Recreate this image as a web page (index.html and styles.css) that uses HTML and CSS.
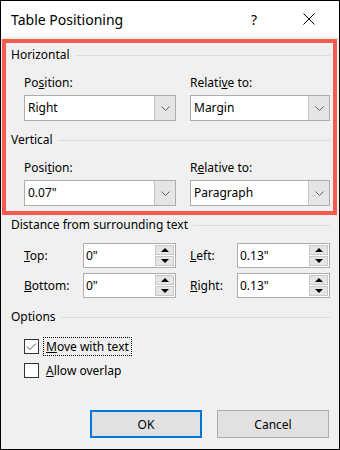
FILE: index.html
```html
<!DOCTYPE html>
<html lang="en">
<head>
  <meta charset="UTF-8">
  <title>Table Positioning</title>
  <link rel="stylesheet" href="styles.css">
</head>
<body>
<div class="dialog">
  <div class="titlebar">
    <span class="title">Table Positioning</span>
    <span class="help">?</span>
    <span class="close">
      <svg width="12" height="12" viewBox="0 0 12 12"><path d="M0.5 0.5 L11.5 11.5 M11.5 0.5 L0.5 11.5" stroke="#000" stroke-width="1" fill="none"/></svg>
    </span>
  </div>

  <div class="content">
    <div class="highlight">
      <div class="group">
        <div class="group-head">Horizontal</div>
        <div class="pair">
          <div class="field left">
            <label>Po<u>s</u>ition:</label>
            <div class="combo"><span>Right</span><i class="drop"><svg width="9" height="5" viewBox="0 0 9 5"><polyline points="0.5,0.5 4.5,4.5 8.5,0.5" fill="none" stroke="#606060"/></svg></i></div>
          </div>
          <div class="field right">
            <label>Relati<u>v</u>e to:</label>
            <div class="combo"><span>Margin</span><i class="drop"><svg width="9" height="5" viewBox="0 0 9 5"><polyline points="0.5,0.5 4.5,4.5 8.5,0.5" fill="none" stroke="#606060"/></svg></i></div>
          </div>
        </div>
      </div>
      <div class="group">
        <div class="group-head">Vertical</div>
        <div class="pair">
          <div class="field left">
            <label>Posi<u>t</u>ion:</label>
            <div class="combo"><span>0.07"</span><i class="drop"><svg width="9" height="5" viewBox="0 0 9 5"><polyline points="0.5,0.5 4.5,4.5 8.5,0.5" fill="none" stroke="#606060"/></svg></i></div>
          </div>
          <div class="field right">
            <label>R<u>e</u>lative to:</label>
            <div class="combo"><span>Paragraph</span><i class="drop"><svg width="9" height="5" viewBox="0 0 9 5"><polyline points="0.5,0.5 4.5,4.5 8.5,0.5" fill="none" stroke="#606060"/></svg></i></div>
          </div>
        </div>
      </div>
    </div>

    <div class="section">
      <div class="group-head dist-head">Distance from surrounding text</div>
      <div class="spin-grid">
        <label><u>T</u>op:</label>
        <div class="spin"><span class="val">0"</span><span class="btns"><i><b class="up"></b></i><i><b class="down"></b></i></span></div>
        <label class="r"><u>L</u>eft:</label>
        <div class="spin"><span class="val">0.13"</span><span class="btns"><i><b class="up"></b></i><i><b class="down"></b></i></span></div>
        <label><u>B</u>ottom:</label>
        <div class="spin"><span class="val">0"</span><span class="btns"><i><b class="up"></b></i><i><b class="down"></b></i></span></div>
        <label class="r"><u>R</u>ight:</label>
        <div class="spin"><span class="val">0.13"</span><span class="btns"><i><b class="up"></b></i><i><b class="down"></b></i></span></div>
      </div>

      <div class="group-head opt-head">Options</div>
      <div class="checks">
        <div class="check">
          <span class="box"><svg width="13" height="13" viewBox="0 0 13 13"><polyline points="2,6.5 5,9.5 11,3.5" fill="none" stroke="#555" stroke-width="1"/></svg></span>
          <span class="text focus"><u>M</u>ove with text</span>
        </div>
        <div class="check">
          <span class="box"></span>
          <span class="text"><u>A</u>llow overlap</span>
        </div>
      </div>
    </div>

    <div class="buttons">
      <button class="btn primary">OK</button>
      <button class="btn">Cancel</button>
    </div>
  </div>
</div>
</body>
</html>
```

FILE: styles.css
```css
* {
  box-sizing: border-box;
}

body {
  margin: 0;
  background: #fff;
  font-family: "Noto Sans", "Open Sans", sans-serif;
  font-size: 12px;
  color: #000;
}

.dialog {
  width: 340px;
  height: 450px;
  border: 1px solid #000;
  display: flex;
  flex-direction: column;
  background: #f0f0f0;
}

/* title bar */
.titlebar {
  height: 36px;
  flex: none;
  background: #fff;
  display: flex;
  align-items: center;
  padding: 0 24px 0 10px;
  font-size: 14px;
}
.title {
  flex: 1;
}
.help {
  margin-right: 46px;
}
.close svg {
  display: block;
}

.content {
  flex: 1;
  padding-top: 2px;
}

/* red outline round the first two groups */
.highlight {
  margin: 0 2px 0 1px;
  border: 4px solid #f55a4e;
  padding: 4px 3px 5px 5px;
}

.group + .group {
  margin-top: 11px;
}

.group-head {
  display: flex;
  align-items: center;
  height: 16px;
  line-height: 16px;
}
.group-head::after {
  content: "";
  flex: 1;
  border-top: 1px solid #dcdcdc;
  margin-left: 5px;
}

.pair {
  display: flex;
  gap: 14px;
  margin: 12px 0 0 13px;
}
.field.left {
  width: 152px;
}
.field.right {
  flex: 1;
}
.field label {
  display: block;
  line-height: 16px;
  margin-bottom: 4px;
}

.combo {
  height: 26px;
  border: 1px solid #adadad;
  background: #fff;
  display: flex;
}
.combo span {
  flex: 1;
  line-height: 24px;
  padding-left: 3px;
}
.drop {
  width: 21px;
  background: #e5e5e5;
  border-left: 1px solid #c4c4c4;
  display: flex;
  align-items: center;
  justify-content: center;
}

/* lower part */
.section {
  padding: 0 9px 0 10px;
}
.dist-head {
  margin-top: 2px;
}

.spin-grid {
  display: grid;
  grid-template-columns: 59px 93px 61px 93px;
  grid-auto-rows: 25px;
  row-gap: 5px;
  margin: 10px 0 0 13px;
}
.spin-grid label {
  line-height: 25px;
}
.spin-grid label.r {
  padding-left: 14px;
}

.spin {
  border: 1px solid #adadad;
  background: #fff;
  display: flex;
}
.spin .val {
  flex: 1;
  line-height: 23px;
  padding-left: 2px;
}
.btns {
  width: 21px;
  padding: 1px;
  display: flex;
  flex-direction: column;
  gap: 1px;
}
.btns i {
  flex: 1;
  background: #e5e5e5;
  border: 1px solid #c8c8c8;
  display: flex;
  align-items: center;
  justify-content: center;
}
.up, .down {
  width: 0;
  height: 0;
  border-left: 4px solid transparent;
  border-right: 4px solid transparent;
}
.up {
  border-bottom: 4px solid #000;
}
.down {
  border-top: 4px solid #000;
}

.opt-head {
  margin-top: 11px;
}

.checks {
  margin: 9px 0 0 13px;
}
.check {
  height: 24px;
  display: flex;
  align-items: center;
}
.box {
  width: 15px;
  height: 15px;
  border: 1px solid #333;
  background: #fff;
  display: flex;
  align-items: center;
  justify-content: center;
}
.check .text {
  margin-left: 4px;
  padding: 0 2px;
  line-height: 17px;
  border: 1px solid transparent;
}
.check .text.focus {
  border: 1px dotted #000;
}

.buttons {
  margin-top: 28px;
  display: flex;
  justify-content: flex-end;
  gap: 15px;
  padding-right: 10px;
}
.btn {
  width: 112px;
  height: 28px;
  background: #e1e1e1;
  border: 1px solid #adadad;
  font: inherit;
  color: #000;
  padding: 0;
}
.btn.primary {
  border: 2px solid #0078d7;
}
```
